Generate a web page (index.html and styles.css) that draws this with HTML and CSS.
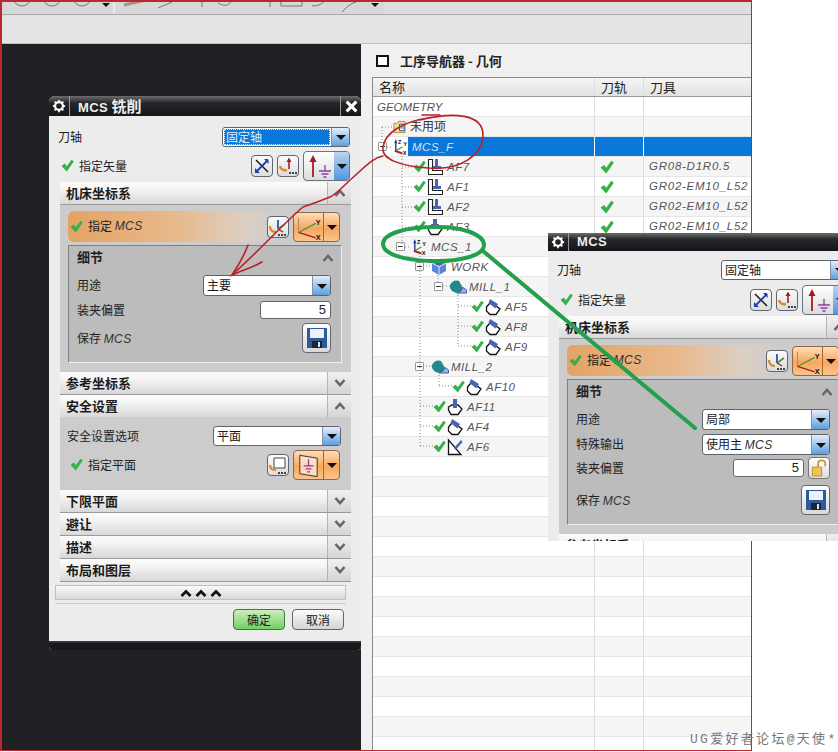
FILE: index.html
```html
<!DOCTYPE html>
<html lang="zh">
<head>
<meta charset="utf-8">
<title>MCS</title>
<link rel="stylesheet" href="styles.css">
</head>
<body>
<svg class="defs" width="0" height="0" aria-hidden="true">
  <defs>
    <symbol id="check" viewBox="0 0 13 13"><path d="M0.500 7 3.800 4.600 5.800 7.200 10.500 0.800 12.800 2.600 5.800 12.500Z" fill="#36b04a"/></symbol>
    <symbol id="gear" viewBox="0 0 16 16"><circle cx="8" cy="8" r="4.500" fill="none" stroke="#fff" stroke-width="2.600"/><path d="M8 1V3.500M8 12.500V15M1 8H3.500M12.500 8H15M3 3 4.800 4.800M11.200 11.200 13 13M3 13 4.800 11.200M11.200 4.800 13 3" stroke="#fff" stroke-width="2"/></symbol>
    <symbol id="close-x" viewBox="0 0 12 12"><path d="M1.500 1.500 10.500 10.500M10.500 1.500 1.500 10.500" stroke="#fff" stroke-width="2.800"/></symbol>
    <symbol id="chev-up" viewBox="0 0 12 8"><path d="M1.500 7 6 2 10.500 7" fill="none" stroke="#666" stroke-width="2.600"/></symbol>
    <symbol id="chev-down" viewBox="0 0 12 8"><path d="M1.500 1 6 6 10.500 1" fill="none" stroke="#666" stroke-width="2.600"/></symbol>
    <symbol id="chev-black" viewBox="0 0 12 8"><path d="M1.500 7 6 2.500 10.500 7" fill="none" stroke="#111" stroke-width="2.800"/></symbol>
    <symbol id="swap" viewBox="0 0 20 20"><path d="M4 4 16 16" stroke="#111" stroke-width="1.400"/><path d="M4 16 16 4" stroke="#1c3fa8" stroke-width="1.800"/><path d="M16 3 17 8 12 3ZM3 17 3 12 8 17Z" fill="#1c3fa8"/></symbol>
    <symbol id="vec-menu" viewBox="0 0 20 20"><path d="M11 3V13" stroke="#a31c25" stroke-width="1.600"/><path d="M8.500 6 11 1.500 13.500 6Z" fill="#a31c25"/><path d="M2 10Q3 15 9 14" fill="none" stroke="#d98a2c" stroke-width="2.400"/><circle cx="12" cy="17" r="1" fill="#111"/><circle cx="15" cy="17" r="1" fill="#111"/><circle cx="18" cy="17" r="1" fill="#111"/></symbol>
    <symbol id="vector" viewBox="0 0 30 28"><path d="M9 8V25" stroke="#a31c25" stroke-width="1.800"/><path d="M5.500 10 9 3 12.500 10Z" fill="#a31c25"/><path d="M21 13V19M15 19H27M17.500 22H24.500M19.500 25H22.500" stroke="#8e3aa8" stroke-width="1.300" fill="none"/></symbol>
    <symbol id="csys-menu" viewBox="0 0 20 20"><path d="M10 12V3" stroke="#1d3f9c" stroke-width="1.600"/><path d="M10 12 17 7" stroke="#3b9a3e" stroke-width="1.600"/><path d="M10 12 15 15" stroke="#a31c25" stroke-width="1.400"/><path d="M2 9Q2 15 8 15" fill="none" stroke="#d98a2c" stroke-width="2.200"/><circle cx="11" cy="18" r="1" fill="#111"/><circle cx="14" cy="18" r="1" fill="#111"/><circle cx="17" cy="18" r="1" fill="#111"/></symbol>
    <symbol id="csys-big" viewBox="0 0 32 28"><path d="M5 20V4" stroke="#a9845c" stroke-width="1"/><path d="M5 20 24 10" stroke="#3b9a3e" stroke-width="1.400"/><path d="M5 20 24 26" stroke="#a31c25" stroke-width="1.400"/><text x="24" y="12" class="axis-label">Y</text><text x="24" y="28" class="axis-label">X</text></symbol>
    <symbol id="plane-menu" viewBox="0 0 20 20"><path d="M6 3H17V13H6Z" fill="#fff" stroke="#444"/><path d="M2 10Q2 15 8 15" fill="none" stroke="#d98a2c" stroke-width="2.200"/><circle cx="11" cy="18" r="1" fill="#111"/><circle cx="14" cy="18" r="1" fill="#111"/><circle cx="17" cy="18" r="1" fill="#111"/></symbol>
    <symbol id="plane-big" viewBox="0 0 30 28"><path d="M6 4 24 7V26L6 23Z" fill="#fff" fill-opacity=".55" stroke="#333"/><path d="M15 8V15M10 15H20M12 18H18M13.500 21H16.500" stroke="#8e3aa8" stroke-width="1.300" fill="none"/></symbol>
    <symbol id="save" viewBox="0 0 22 22"><path d="M1 1H21V21H1Z" fill="#2d5a9c"/><path d="M4 2H18V11H4Z" fill="#eef2f8"/><path d="M6 14H16V21H6Z" fill="#20242c"/><path d="M12 15H14V20H12Z" fill="#dfe6f0"/></symbol>
    <symbol id="lock" viewBox="0 0 18 20"><path d="M8 9V5Q8 1.500 12 1.500T16 5V8" fill="none" stroke="#c99a2e" stroke-width="2"/><path d="M1.500 9H12V19H1.500Z" fill="#eec35a" stroke="#b98a25"/></symbol>
    <symbol id="folder" viewBox="0 0 14 14"><path d="M1 3H5L6 1H13V13H1Z" fill="#f2dfa0" stroke="#a98f4a"/><path d="M7 4H12V11H7Z" fill="#fff" stroke="#33456e"/><path d="M8 6H11M8 8H11" stroke="#33456e"/></symbol>
    <symbol id="mcs" viewBox="0 0 17 18"><path d="M4 13V3" stroke="#1d3f9c" stroke-width="1.500"/><path d="M2.300 5 4 0.500 5.700 5Z" fill="#1d3f9c"/><path d="M4 13 11 9" stroke="#3b9a3e" stroke-width="1.300"/><path d="M3 13 11 16" stroke="#b5252c" stroke-width="2.200"/><text x="6.500" y="6" class="tree-label">Z</text><text x="12" y="8" class="tree-label">Y</text><text x="11.500" y="18" class="tree-label">X</text></symbol>
    <symbol id="work" viewBox="0 0 16 18"><path d="M1 5 8 2 15 5V13L8 17 1 13Z" fill="#5c86d8"/><path d="M5 2H11V7H5Z" fill="#3f63b8"/><path d="M8 9V17M1 5 8 9 15 5" stroke="#dfe8f8" fill="none"/></symbol>
    <symbol id="mill" viewBox="0 0 18 18"><path d="M0.500 8Q4 1 10 3L14 10 16 15H9Q2 15 0.500 8Z" fill="#23888c"/><path d="M8 15H17.500V12L14 9.500 12 13Z" fill="#9fb7e0" stroke="#3f5ca0"/></symbol>
    <symbol id="planar" viewBox="0 0 16 18"><path d="M1.500 1.500V16.500H15.500V12.500H5.500V1.500Z" fill="#fff" stroke="#222" stroke-width="1.100"/><path d="M8 1H11V11H8ZM6 8H14V11H6Z" fill="#4a63b8"/></symbol>
    <symbol id="cavity" viewBox="0 0 16 18"><path d="M1.500 9 5 5H7L15 11 11 16.500H5L1.500 13Z" fill="#fff" stroke="#111" stroke-width="1.300"/><path d="M5 1 13 6 10.500 10.500 3.500 5Z" fill="#4a63b8"/></symbol>
    <symbol id="zlevel" viewBox="0 0 16 18"><path d="M1.500 9 5 7H11L15 11 11 16.500H4L1.500 12Z" fill="#fff" stroke="#111" stroke-width="1.300"/><path d="M6 1H10V10H6Z" fill="#4a63b8"/></symbol>
    <symbol id="flow" viewBox="0 0 16 18"><path d="M1.500 2V16.500H14L1.500 2Z" fill="#fff" stroke="#111" stroke-width="1.300"/><path d="M7 10 14 2 15.500 4 8.500 12Z" fill="#4a63b8"/></symbol>
  </defs>
</svg>

<div class="canvas">
  <div class="app">
    <div class="toolbar">
      <svg class="toolbar-art" width="400" height="14" viewBox="0 0 400 14">
        <g fill="none" stroke="#777">
          <circle cx="22" cy="-3" r="9"/><circle cx="52" cy="-3" r="9"/><circle cx="82" cy="-3" r="9"/>
          <path d="M202 0V7M270 0V7M281 0V6H302V0"/>
          <path d="M218 3Q228 9 232 0M312 6Q322 6 325 0M342 12Q352 0 366 0M158 8 172 2"/>
        </g>
        <path d="M124 5 146 0" stroke="#b08f80" stroke-width="3"/>
        <path d="M102 3H110L106 7ZM371 3H379L375 7Z" fill="#111"/>
        <path d="M114 0V14" stroke="#fff"/>
      </svg>
    </div>
    <div class="ribbon"></div>
    <div class="workspace">
      <div class="viewport"></div>
      <section class="navigator">
        <header class="nav-head"><span class="nav-square"></span><h1 class="nav-title">工序导航器 - 几何</h1></header>
        <div class="nav-table">
          <div class="nav-columns"><span class="cell-name">名称</span><span class="cell-path">刀轨</span><span class="cell-tool">刀具</span></div>
          <div class="row"><span class="cell-name tree"><i class="node-text plain-pad">GEOMETRY</i></span><span class="cell-path"></span><span class="cell-tool"></span></div>
          <div class="row"><span class="cell-name tree pad-20"><svg class="ico-folder"><use href="#folder"/></svg><span class="node-cjk">未用项</span></span><span class="cell-path"></span><span class="cell-tool"></span></div>
          <div class="row row-selected"><span class="cell-name tree pad-5"><span class="expander"></span><svg class="ico gap-mcsf"><use href="#mcs"/></svg><i class="node-text">MCS_F</i></span><span class="cell-path"></span><span class="cell-tool"></span></div>
          <div class="row"><span class="cell-name tree pad-40"><svg class="tick"><use href="#check"/></svg><svg class="ico"><use href="#planar"/></svg><i class="node-text">AF7</i></span><span class="cell-path"><svg class="tick"><use href="#check"/></svg></span><i class="cell-tool">GR08-D1R0.5</i></div>
          <div class="row"><span class="cell-name tree pad-40"><svg class="tick"><use href="#check"/></svg><svg class="ico"><use href="#planar"/></svg><i class="node-text">AF1</i></span><span class="cell-path"><svg class="tick"><use href="#check"/></svg></span><i class="cell-tool">GR02-EM10_L52</i></div>
          <div class="row"><span class="cell-name tree pad-40"><svg class="tick"><use href="#check"/></svg><svg class="ico"><use href="#planar"/></svg><i class="node-text">AF2</i></span><span class="cell-path"><svg class="tick"><use href="#check"/></svg></span><i class="cell-tool">GR02-EM10_L52</i></div>
          <div class="row"><span class="cell-name tree pad-40"><svg class="tick"><use href="#check"/></svg><svg class="ico"><use href="#zlevel"/></svg><i class="node-text">AF3</i></span><span class="cell-path"><svg class="tick"><use href="#check"/></svg></span><i class="cell-tool">GR02-EM10_L52</i></div>
          <div class="row"><span class="cell-name tree pad-23"><span class="expander"></span><svg class="ico gap-left"><use href="#mcs"/></svg><i class="node-text">MCS_1</i></span><span class="cell-path"></span><span class="cell-tool"></span></div>
          <div class="row"><span class="cell-name tree pad-42"><span class="expander"></span><svg class="ico gap-wide"><use href="#work"/></svg><i class="node-text">WORK</i></span><span class="cell-path"></span><span class="cell-tool"></span></div>
          <div class="row"><span class="cell-name tree pad-61"><span class="expander"></span><svg class="ico ico-wide gap-left"><use href="#mill"/></svg><i class="node-text">MILL_1</i></span><span class="cell-path"></span><span class="cell-tool"></span></div>
          <div class="row"><span class="cell-name tree pad-98"><svg class="tick"><use href="#check"/></svg><svg class="ico"><use href="#cavity"/></svg><i class="node-text">AF5</i></span><span class="cell-path"></span><span class="cell-tool"></span></div>
          <div class="row"><span class="cell-name tree pad-98"><svg class="tick"><use href="#check"/></svg><svg class="ico"><use href="#cavity"/></svg><i class="node-text">AF8</i></span><span class="cell-path"></span><span class="cell-tool"></span></div>
          <div class="row"><span class="cell-name tree pad-98"><svg class="tick"><use href="#check"/></svg><svg class="ico"><use href="#cavity"/></svg><i class="node-text">AF9</i></span><span class="cell-path"></span><span class="cell-tool"></span></div>
          <div class="row"><span class="cell-name tree pad-42"><span class="expander"></span><svg class="ico ico-wide gap-wide"><use href="#mill"/></svg><i class="node-text">MILL_2</i></span><span class="cell-path"></span><span class="cell-tool"></span></div>
          <div class="row"><span class="cell-name tree pad-79"><svg class="tick"><use href="#check"/></svg><svg class="ico"><use href="#cavity"/></svg><i class="node-text">AF10</i></span><span class="cell-path"></span><span class="cell-tool"></span></div>
          <div class="row"><span class="cell-name tree pad-60"><svg class="tick"><use href="#check"/></svg><svg class="ico"><use href="#zlevel"/></svg><i class="node-text">AF11</i></span><span class="cell-path"></span><span class="cell-tool"></span></div>
          <div class="row"><span class="cell-name tree pad-60"><svg class="tick"><use href="#check"/></svg><svg class="ico"><use href="#cavity"/></svg><i class="node-text">AF4</i></span><span class="cell-path"></span><span class="cell-tool"></span></div>
          <div class="row"><span class="cell-name tree pad-60"><svg class="tick"><use href="#check"/></svg><svg class="ico"><use href="#flow"/></svg><i class="node-text">AF6</i></span><span class="cell-path"></span><span class="cell-tool"></span></div>
          <div class="row"><span class="cell-name"></span><span class="cell-path"></span><span class="cell-tool"></span></div>
          <div class="row"><span class="cell-name"></span><span class="cell-path"></span><span class="cell-tool"></span></div>
          <div class="row"><span class="cell-name"></span><span class="cell-path"></span><span class="cell-tool"></span></div>
          <div class="row"><span class="cell-name"></span><span class="cell-path"></span><span class="cell-tool"></span></div>
          <div class="row"><span class="cell-name"></span><span class="cell-path"></span><span class="cell-tool"></span></div>
          <div class="row"><span class="cell-name"></span><span class="cell-path"></span><span class="cell-tool"></span></div>
          <div class="row"><span class="cell-name"></span><span class="cell-path"></span><span class="cell-tool"></span></div>
          <div class="row"><span class="cell-name"></span><span class="cell-path"></span><span class="cell-tool"></span></div>
          <div class="row"><span class="cell-name"></span><span class="cell-path"></span><span class="cell-tool"></span></div>
          <div class="row"><span class="cell-name"></span><span class="cell-path"></span><span class="cell-tool"></span></div>
          <div class="row"><span class="cell-name"></span><span class="cell-path"></span><span class="cell-tool"></span></div>
          <div class="row"><span class="cell-name"></span><span class="cell-path"></span><span class="cell-tool"></span></div>
          <div class="row"><span class="cell-name"></span><span class="cell-path"></span><span class="cell-tool"></span></div>
          <div class="row"><span class="cell-name"></span><span class="cell-path"></span><span class="cell-tool"></span></div>
          <div class="row"><span class="cell-name"></span><span class="cell-path"></span><span class="cell-tool"></span></div>
          <svg class="tree-lines" width="230" height="460" viewBox="0 0 230 460">
            <path d="M9 31V46M9 31H20M14 51H19M29 60V151M29 71H40M29 91H40M29 111H40M29 131H40M32 151H38M47 160V350M50 170H58M47 310H60M47 330H60M47 350H60M65 179V186M70 190H76M85 199V250M85 210H98M85 230H98M85 250H98M50 270H58M66 279V290M66 290H79" fill="none" stroke="#8a8a8a" stroke-dasharray="1 2"/>
          </svg>
        </div>
      </section>
    </div>
  </div>

  <article class="dialog dialog-main">
    <header class="dlg-title">
      <span class="gear"><svg><use href="#gear"/></svg></span>
      <h2 class="dlg-name"><span class="dlg-latin">MCS</span> 铣削</h2>
      <button class="close"><svg><use href="#close-x"/></svg></button>
    </header>
    <div class="dlg-body">
      <div class="field first">
        <span>刀轴</span>
        <div class="combo combo-selected"><span class="combo-value">固定轴</span><span class="combo-arrow"></span></div>
      </div>
      <div class="field vector-row">
        <span class="label"><svg class="tick"><use href="#check"/></svg>指定矢量</span>
        <div class="tools">
          <button class="tool"><svg><use href="#swap"/></svg></button>
          <button class="tool"><svg><use href="#vec-menu"/></svg></button>
          <div class="split"><svg class="split-main"><use href="#vector"/></svg><span class="split-blue"></span></div>
        </div>
      </div>
      <div class="section-head"><span>机床坐标系</span><span class="chev"><svg><use href="#chev-up"/></svg></span></div>
      <div class="section-body">
        <div class="orange-row">
          <span class="label"><svg class="tick"><use href="#check"/></svg>指定&nbsp;<i class="mcs">MCS</i></span>
          <div class="tools">
            <button class="tool"><svg><use href="#csys-menu"/></svg></button>
            <div class="split split-orange"><svg class="split-main"><use href="#csys-big"/></svg><span class="split-drop"></span></div>
          </div>
        </div>
        <div class="subgroup">
          <div class="sub-title"><b>细节</b><svg class="sub-chev"><use href="#chev-up"/></svg></div>
          <div class="sub-field"><span>用途</span><div class="combo"><span class="combo-value">主要</span><span class="combo-arrow"></span></div></div>
          <div class="sub-field number"><span>装夹偏置</span><div class="num">5</div></div>
          <div class="sub-field save-row"><span>保存&nbsp;<i class="mcs">MCS</i></span><button class="save"><svg><use href="#save"/></svg></button></div>
        </div>
      </div>
      <div class="section-head"><span>参考坐标系</span><span class="chev"><svg><use href="#chev-down"/></svg></span></div>
      <div class="section-head"><span>安全设置</span><span class="chev"><svg><use href="#chev-up"/></svg></span></div>
      <div class="section-body safety">
        <div class="safety-row"><span>安全设置选项</span><div class="combo"><span class="combo-value">平面</span><span class="combo-arrow"></span></div></div>
        <div class="safety-plane">
          <span class="label"><svg class="tick"><use href="#check"/></svg>指定平面</span>
          <div class="tools">
            <button class="tool"><svg><use href="#plane-menu"/></svg></button>
            <div class="split split-orange"><svg class="split-main"><use href="#plane-big"/></svg><span class="split-drop"></span></div>
          </div>
        </div>
      </div>
      <div class="section-head"><span>下限平面</span><span class="chev"><svg><use href="#chev-down"/></svg></span></div>
      <div class="section-head"><span>避让</span><span class="chev"><svg><use href="#chev-down"/></svg></span></div>
      <div class="section-head"><span>描述</span><span class="chev"><svg><use href="#chev-down"/></svg></span></div>
      <div class="section-head"><span>布局和图层</span><span class="chev"><svg><use href="#chev-down"/></svg></span></div>
      <div class="collapse-bar"><svg><use href="#chev-black"/></svg><svg><use href="#chev-black"/></svg><svg><use href="#chev-black"/></svg></div>
      <div class="actions">
        <button class="btn btn-ok">确定</button>
        <button class="btn">取消</button>
      </div>
    </div>
    <div class="dlg-foot"></div>
  </article>

  <article class="dialog dialog-crop">
    <header class="dlg-title">
      <span class="gear"><svg><use href="#gear"/></svg></span>
      <h2 class="dlg-name"><span class="dlg-latin">MCS</span></h2>
    </header>
    <div class="dlg-body">
      <div class="field first">
        <span>刀轴</span>
        <div class="combo"><span class="combo-value">固定轴</span><span class="combo-arrow"></span></div>
      </div>
      <div class="field vector-row">
        <span class="label"><svg class="tick"><use href="#check"/></svg>指定矢量</span>
        <div class="tools">
          <button class="tool"><svg><use href="#swap"/></svg></button>
          <button class="tool"><svg><use href="#vec-menu"/></svg></button>
          <div class="split"><svg class="split-main"><use href="#vector"/></svg><span class="split-blue"></span></div>
        </div>
      </div>
      <div class="section-head"><span>机床坐标系</span><span class="chev"><svg><use href="#chev-up"/></svg></span></div>
      <div class="section-body">
        <div class="orange-row">
          <span class="label"><svg class="tick"><use href="#check"/></svg>指定&nbsp;<i class="mcs">MCS</i></span>
          <div class="tools">
            <button class="tool"><svg><use href="#csys-menu"/></svg></button>
            <div class="split split-orange"><svg class="split-main"><use href="#csys-big"/></svg><span class="split-drop"></span></div>
          </div>
        </div>
        <div class="subgroup">
          <div class="sub-title"><b>细节</b><svg class="sub-chev"><use href="#chev-up"/></svg></div>
          <div class="sub-field"><span>用途</span><div class="combo"><span class="combo-value">局部</span><span class="combo-arrow"></span></div></div>
          <div class="sub-field tight"><span>特殊输出</span><div class="combo"><span class="combo-value">使用主&nbsp;<i class="mcs">MCS</i></span><span class="combo-arrow"></span></div></div>
          <div class="sub-field number"><span>装夹偏置</span><div class="num-wrap"><div class="num">5</div><button class="lock"><svg><use href="#lock"/></svg></button></div></div>
          <div class="sub-field save-row wide"><span>保存&nbsp;<i class="mcs">MCS</i></span><button class="save"><svg><use href="#save"/></svg></button></div>
        </div>
      </div>
      <div class="section-head"><span>参考坐标系</span><span class="chev"></span></div>
    </div>
  </article>

  <svg class="annotations" width="838" height="752" viewBox="0 0 838 752" aria-hidden="true">
    <g fill="none" stroke="#b8232a" stroke-width="1.600" stroke-linecap="round">
      <path d="M422 115H440"/>
      <path d="M420 120C452 112 484 113 483 136 482 154 462 171 428 168 402 166 381 160 383 147 385 133 402 122 428 118"/>
      <path d="M383 156C372 158 362 170 350 180 340 190 335 195 330 197 318 202 312 204 303 207 285 222 260 250 232 275"/>
      <path d="M248 245C244 256 238 266 232 275 242 270 252 268 262 262"/>
    </g>
    <g fill="none" stroke="#22a04d" stroke-linecap="round">
      <path d="M434 227C460 226 484 234 484 245 484 256 458 262 430 261 403 260 383 254 383 244 383 234 405 227 434 227Z" stroke-width="4"/>
      <path d="M483 251 695 428" stroke-width="4"/>
    </g>
  </svg>
  <div class="watermark">UG爱好者论坛@天使*</div>
</div>
</body>
</html>
```
FILE: styles.css
```css
* { box-sizing: border-box; }
html, body { margin: 0; padding: 0; background: #fff; }
body { font: 12px/1.2 "Noto Sans CJK SC", "Liberation Sans", sans-serif; color: #222; }
button { font: inherit; color: inherit; padding: 0; }
h1, h2 { margin: 0; }
i { font-style: italic; }
.defs { position: absolute; }
.canvas { position: relative; width: 838px; height: 752px; overflow: hidden; background: #fff; }
.app { width: 752px; height: 751px; display: flex; flex-direction: column; border: 1px solid #b92a30; border-left-width: 2px; border-top-width: 2px; overflow: hidden; }

.toolbar { height: 13px; flex: none; background: linear-gradient(90deg, #d8d8d8 0 382px, #dedede 382px); border-bottom: 1px solid #a8a8a8; overflow: hidden; }
.toolbar-art { display: block; margin: -2px 0 0 -2px; }
.ribbon { height: 29px; flex: none; background: #e4e4e4; border-bottom: 1px solid #bdbdbd; }
.workspace { flex: 1; display: flex; min-height: 0; }
.viewport { width: 359px; flex: none; background: #202125; }
.navigator { flex: 1; background: #f0f0f0; display: flex; flex-direction: column; min-width: 0; padding-left: 11px; }
.nav-head { height: 33px; flex: none; display: flex; align-items: center; padding: 0 0 0 4px; }
.nav-square { width: 13px; height: 12px; border: 2px solid #111; background: #fff; margin-right: 11px; }
.nav-title { font-size: 13px; font-weight: 700; color: #222; }
.nav-table { position: relative; flex: 1; background: #fff; border-left: 1px solid #8a8a8a; border-top: 1px solid #8a8a8a; overflow: hidden; }
.nav-columns { height: 19px; display: flex; align-items: center; background: linear-gradient(#f5f5f5, #e2e2e2); border-bottom: 1px solid #999; font-size: 13px; }
.nav-columns span { height: 100%; display: flex; align-items: center; padding-left: 6px; }
.cell-name { width: 221px; flex: none; }
.cell-path { width: 49px; flex: none; border-left: 1px solid #ddd; }
.cell-tool { flex: 1; border-left: 1px solid #ddd; }
.row { height: 20px; display: flex; align-items: stretch; border-bottom: 1px solid #e6e6e6; }
.row:nth-child(odd) { background: #f5f5f5; }
.row > .cell-tool { display: flex; align-items: center; padding-left: 5px; font-size: 11.500px; letter-spacing: 0.750px; color: #555; font-family: "Liberation Sans", sans-serif; white-space: nowrap; }
.row > .cell-path { display: flex; align-items: center; padding-left: 5px; }
.row > .cell-path .tick { width: 14px; height: 14px; }
.tree { display: flex; align-items: center; }
.pad-5 { padding-left: 5px; } .pad-20 { padding-left: 20px; } .pad-23 { padding-left: 23px; }
.pad-40 { padding-left: 40px; } .pad-42 { padding-left: 42px; } .pad-60 { padding-left: 60px; }
.pad-61 { padding-left: 61px; } .pad-79 { padding-left: 79px; } .pad-98 { padding-left: 98px; }
.expander { position: relative; width: 9px; height: 9px; flex: none; border: 1px solid #999; border-radius: 1px; background: #fff; }
.expander::after { content: ""; position: absolute; left: 1px; right: 1px; top: 3px; height: 1px; background: #333; }
.tick { width: 13px; height: 13px; flex: none; margin-right: 1px; }
.ico { width: 16px; height: 18px; flex: none; }
.ico-wide { width: 18px; margin-right: -2px; }
.ico-folder { width: 13px; height: 14px; flex: none; }
.gap-mcsf { margin-left: 5px; }
.gap-left { margin-left: 6px; }
.gap-wide { margin-left: 7px; }
.node-text { margin-left: 4px; font: italic 11.500px "Liberation Sans", sans-serif; letter-spacing: 0.500px; color: #555; }
.plain-pad { margin-left: 4px; letter-spacing: 0; }
.node-cjk { margin-left: 4px; font-size: 12px; color: #333; }
.row-selected > span:not(.cell-name) { background: #0a78d8; border-left-color: #fff; }
.row-selected .cell-name { background: linear-gradient(90deg, transparent 35px, #0a78d8 35px); }
.row-selected .node-text { color: #cde6ff; }
.tree-lines { position: absolute; left: 0; top: 18px; pointer-events: none; }

.dialog { position: absolute; display: flex; flex-direction: column; background: #ececec; overflow: hidden; }
.dialog-main { left: 49px; top: 96px; width: 312px; height: 554px; border-radius: 6px 6px 4px 4px; }
.dialog-crop { left: 548px; top: 233px; width: 312px; height: 308px; }
.dlg-title { height: 20px; flex: none; display: flex; align-items: center; background: linear-gradient(#6d6d6d 0, #26272b 35%, #15161a 100%); color: #fff; }
.gear { width: 21px; height: 100%; display: flex; align-items: center; justify-content: center; border-right: 1px solid #9a9a9a; }
.gear svg { width: 14px; height: 14px; }
.dlg-name { margin-left: 8px; flex: 1; font-size: 15px; line-height: 18px; font-weight: 700; color: #eee; white-space: nowrap; }
.dlg-latin { font: 700 13px "Liberation Sans", sans-serif; letter-spacing: 0.400px; }
.close { width: 21px; height: 100%; background: none; border: 0; border-left: 1px solid #9a9a9a; display: flex; align-items: center; justify-content: center; }
.close svg { width: 13px; height: 13px; }
.dlg-body { flex: 1; padding: 0 10px 0 9px; display: flex; flex-direction: column; min-height: 0; }
.dlg-foot { height: 9px; flex: none; background: linear-gradient(#444 0, #17181b 30%); }
.field { display: flex; align-items: center; justify-content: space-between; padding-right: 1px; }
.first { margin-top: 11px; height: 20px; }
.vector-row { margin-top: 4px; height: 30px; }
.label { display: flex; align-items: center; padding-left: 3px; white-space: nowrap; }
.label .tick { margin-right: 5px; width: 13px; height: 13px; }
.tools { display: flex; align-items: center; gap: 4px; }
.tool { width: 22px; height: 22px; border: 1px solid #5f6672; border-radius: 4px; background: linear-gradient(#fbfbfb, #dcdcdc); display: flex; align-items: center; justify-content: center; }
.tool svg { width: 20px; height: 20px; }
.split { width: 47px; height: 30px; display: flex; border: 1px solid #6b7280; border-radius: 4px; background: linear-gradient(#fff, #dcdcdc); overflow: hidden; }
.split-main { flex: 1; height: 100%; min-width: 0; }
.split-blue { position: relative; width: 15px; background: linear-gradient(#bcd4ee, #4f98df); }
.split-blue::after, .combo-arrow::after, .split-drop::after { content: ""; position: absolute; left: 50%; top: 50%; margin: -2px 0 0 -5px; border: 5px solid transparent; border-top: 5px solid #111; border-bottom: 0; }
.split-orange { border-color: #8a6a48; background: linear-gradient(#ffdcb8, #f7a75e 55%, #fbc48c); }
.split-drop { position: relative; width: 16px; border-left: 1px solid #a06a30; }
.combo { width: 128px; height: 20px; display: flex; border: 1px solid #5c6470; border-radius: 3px; background: #fff; overflow: hidden; }
.combo-value { flex: 1; padding-left: 3px; display: flex; align-items: center; white-space: nowrap; color: #1a1a1a; }
.combo-selected .combo-value { margin: 1px; padding-left: 2px; background: #0a78d8; color: #dff0ff; outline: 1px dotted #d7ecff; outline-offset: -1px; }
.combo-arrow { position: relative; width: 18px; flex: none; background: linear-gradient(#e6eef8, #5b9fe2); border-left: 1px solid #7d93ad; }
.section-head { height: 23px; flex: none; margin-left: 2px; display: flex; align-items: center; justify-content: space-between; background: linear-gradient(#fbfbfb, #f5f5f5 30%, #d8d8d8); border-bottom: 1px solid #9a9a9a; padding-left: 6px; font-size: 13px; font-weight: 700; color: #1b1b1b; }
.chev { width: 24px; height: 100%; display: flex; align-items: center; justify-content: center; border-left: 1px solid #b5b5b5; background: linear-gradient(#f0f0f0, #d5d5d5); }
.chev svg { width: 12px; height: 8px; }
.vector-row + .section-head { margin-top: 1px; }
.section-body { margin-left: 2px; flex: none; background: #cccccc; padding: 6px 0 9px 8px; }
.orange-row { margin-right: 11px; height: 31px; display: flex; align-items: center; justify-content: space-between; border-radius: 6px 0 0 6px; background: linear-gradient(90deg, #e4a365 0, #e8b98c 40%, #dccfc3 65%, #cccccc 78%); }
.orange-row .tools { gap: 4px; }
.orange-row .label { padding-left: 2px; }
.mcs { font: italic 12px "Liberation Sans", sans-serif; letter-spacing: 0.400px; color: #333; }
.subgroup { margin: 3px 9px 0 0; background: #bcbcbc; border: 1px solid; border-color: #808080 #f0f0f0 #f0f0f0 #808080; padding: 0 10px 9px 8px; }
.sub-title { height: 23px; display: flex; align-items: center; justify-content: space-between; font-size: 13px; }
.sub-title b { font-weight: 700; position: relative; top: -1px; }
.sub-chev { width: 12px; height: 8px; margin-right: -3px; }
.sub-field { display: flex; align-items: center; justify-content: space-between; height: 21px; margin-top: 6px; }
.sub-field .combo { height: 21px; }
.tight { margin-top: 4px; }
.number { height: 18px; margin-top: 5px; }
.tight + .number { height: 18px; margin-top: 4px; }
.num { width: 71px; height: 18px; border: 1px solid #666; border-radius: 3px; background: #fff; text-align: right; padding-right: 4px; font: 13px/16px "Liberation Sans", sans-serif; }
.num-wrap { display: flex; align-items: center; gap: 4px; }
.lock { width: 22px; height: 22px; border: 1px solid #777; border-radius: 4px; background: linear-gradient(#fff, #ddd); display: flex; align-items: center; justify-content: center; }
.lock svg { width: 16px; height: 18px; }
.save-row { height: 30px; margin-top: 4px; }
.wide { margin-top: 8px; }
.save { width: 29px; height: 30px; border: 1px solid #667; border-radius: 4px; background: linear-gradient(#fff, #d8d8d8); display: flex; align-items: center; justify-content: center; }
.save svg { width: 22px; height: 22px; }
.safety { margin-top: -1px; padding: 9px 10px 0 7px; height: 73px; }
.safety-row { display: flex; align-items: center; justify-content: space-between; height: 20px; }
.safety-plane { display: flex; align-items: center; justify-content: space-between; height: 30px; margin-top: 4px; padding-right: 1px; }
.safety-plane .label { padding-left: 3px; }
.collapse-bar { margin: 3px 5px 0 -3px; height: 15px; flex: none; display: flex; align-items: center; justify-content: center; gap: 3px; background: linear-gradient(#fafafa, #d9d9d9); border: 1px solid #c0c0c0; }
.collapse-bar svg { width: 12px; height: 8px; }
.actions { margin: 3px 5px 0 -3px; padding: 5px 2px 0 0; border-top: 1px solid #cfcfcf; display: flex; justify-content: flex-end; gap: 7px; }
.btn { width: 52px; height: 21px; border: 1px solid #666; border-radius: 4px; background: linear-gradient(#fbfbfb, #d4d4d4); font-size: 12px; line-height: 17px; }
.btn-ok { background: linear-gradient(#cdeebb, #6fd065); border-color: #3e7a3f; }
.dialog-crop .dlg-title { height: 18px; }
.dialog-crop .first { margin-top: 9px; }
.dialog-crop .vector-row + .section-head { margin-top: 1px; }
.dialog-crop .vector-row { margin-top: 5px; }
.dialog-crop .dlg-name { align-self: flex-start; line-height: 13px; }
.annotations { position: absolute; left: 0; top: 0; pointer-events: none; }
.axis-label { font: 700 8px "Liberation Sans", sans-serif; fill: #111; }
.tree-label { font: 700 6px "Liberation Sans", sans-serif; fill: #111; }
.watermark { position: absolute; left: 690px; top: 732px; font: 13px/16px "Liberation Mono", "Noto Sans CJK JP", monospace; letter-spacing: 2.300px; color: #777; white-space: nowrap; }
```
